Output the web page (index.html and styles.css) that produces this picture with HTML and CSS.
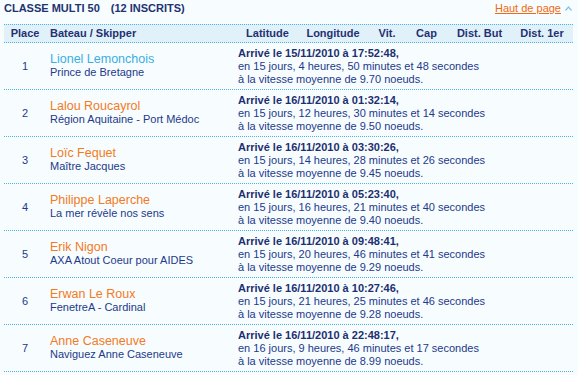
FILE: index.html
```html
<!DOCTYPE html>
<html lang="fr">
<head>
<meta charset="utf-8">
<title>Classe Multi 50</title>
<link rel="stylesheet" href="styles.css">
</head>
<body>
<div class="page">
  <div class="titlebar">
    <h1 class="title">CLASSE MULTI 50<span class="count">(12 INSCRITS)</span></h1>
    <a class="top" href="#">Haut de page</a>
    <svg class="caret" width="7" height="5" viewBox="0 0 7 5"><polyline points="0.5,4.5 3.5,1 6.5,4.5" fill="none" stroke="#7cc4e8" stroke-width="1.2"/></svg>
  </div>
  <div class="row head">
    <div class="c center">Place</div>
    <div class="c">Bateau / Skipper</div>
    <div class="c center">Latitude</div>
    <div class="c center">Longitude</div>
    <div class="c center">Vit.</div>
    <div class="c center">Cap</div>
    <div class="c center">Dist. But</div>
    <div class="c center">Dist. 1er</div>
  </div>

  <div class="row">
    <div class="place">1</div>
    <div class="boat"><div class="name blue">Lionel Lemonchois</div><div class="skip">Prince de Bretagne</div></div>
    <div class="data"><div class="b">Arrivé le 15/11/2010 à 17:52:48,</div><div>en 15 jours, 4 heures, 50 minutes et 48 secondes</div><div>à la vitesse moyenne de 9.70 noeuds.</div></div>
  </div>
  <div class="row">
    <div class="place">2</div>
    <div class="boat"><div class="name">Lalou Roucayrol</div><div class="skip">Région Aquitaine - Port Médoc</div></div>
    <div class="data"><div class="b">Arrivé le 16/11/2010 à 01:32:14,</div><div>en 15 jours, 12 heures, 30 minutes et 14 secondes</div><div>à la vitesse moyenne de 9.50 noeuds.</div></div>
  </div>
  <div class="row">
    <div class="place">3</div>
    <div class="boat"><div class="name">Loïc Fequet</div><div class="skip">Maître Jacques</div></div>
    <div class="data"><div class="b">Arrivé le 16/11/2010 à 03:30:26,</div><div>en 15 jours, 14 heures, 28 minutes et 26 secondes</div><div>à la vitesse moyenne de 9.45 noeuds.</div></div>
  </div>
  <div class="row">
    <div class="place">4</div>
    <div class="boat"><div class="name">Philippe Laperche</div><div class="skip">La mer révèle nos sens</div></div>
    <div class="data"><div class="b">Arrivé le 16/11/2010 à 05:23:40,</div><div>en 15 jours, 16 heures, 21 minutes et 40 secondes</div><div>à la vitesse moyenne de 9.40 noeuds.</div></div>
  </div>
  <div class="row">
    <div class="place">5</div>
    <div class="boat"><div class="name">Erik Nigon</div><div class="skip">AXA Atout Coeur pour AIDES</div></div>
    <div class="data"><div class="b">Arrivé le 16/11/2010 à 09:48:41,</div><div>en 15 jours, 20 heures, 46 minutes et 41 secondes</div><div>à la vitesse moyenne de 9.29 noeuds.</div></div>
  </div>
  <div class="row">
    <div class="place">6</div>
    <div class="boat"><div class="name">Erwan Le Roux</div><div class="skip">FenetreA - Cardinal</div></div>
    <div class="data"><div class="b">Arrivé le 16/11/2010 à 10:27:46,</div><div>en 15 jours, 21 heures, 25 minutes et 46 secondes</div><div>à la vitesse moyenne de 9.28 noeuds.</div></div>
  </div>
  <div class="row">
    <div class="place">7</div>
    <div class="boat"><div class="name">Anne Caseneuve</div><div class="skip">Naviguez Anne Caseneuve</div></div>
    <div class="data"><div class="b">Arrivé le 16/11/2010 à 22:48:17,</div><div>en 16 jours, 9 heures, 46 minutes et 17 secondes</div><div>à la vitesse moyenne de 8.99 noeuds.</div></div>
  </div>
</div>
</body>
</html>
```

FILE: styles.css
```css
html, body {
  margin: 0;
  padding: 0;
  background: #f7fdff;
}
body {
  font-family: "Liberation Sans", Arial, sans-serif;
  font-size: 11px;
  color: #23398a;
}
.page {
  padding: 0 5px 0 4px;
}
.titlebar {
  display: flex;
  align-items: baseline;
  height: 24px;
  box-sizing: border-box;
  padding-top: 2px;
  line-height: 13px;
}
.title {
  margin: 0;
  font-size: 11px;
  font-weight: bold;
  color: #22326f;
  flex: 1;
}
.count {
  margin-left: 11px;
}
.top {
  color: #f06a12;
  text-decoration: underline;
  margin-right: 4px;
}
.caret {
  margin-right: 1px;
  align-self: flex-start;
  margin-top: 4px;
}
.row {
  display: grid;
  grid-template-columns: 42px 192px 59px 72px 36px 43px 63px 62px;
  align-items: center;
  height: 46px;
  border-bottom: 1px dotted #4fb2e2;
}
.row.head {
  height: 16px;
  padding-bottom: 1px;
  background: #e1f1f9;
  border-top: 1px dotted #4fb2e2;
  font-weight: bold;
  color: #1f3173;
  line-height: 16px;
}
.c {
  white-space: nowrap;
}
.head .c:nth-child(2) {
  padding-left: 4px;
}
.center {
  text-align: center;
}
.place {
  text-align: center;
  color: #23398a;
}
.boat {
  padding-left: 4px;
}
.name {
  font-size: 12.5px;
  line-height: 13px;
  color: #f47a1e;
}
.name.blue {
  color: #3aaee2;
}
.skip {
  line-height: 13px;
  color: #23398a;
}
.data {
  grid-column: 3 / -1;
  line-height: 13px;
  white-space: nowrap;
  color: #23398a;
  padding-top: 1px;
}
.data .b {
  font-weight: bold;
  color: #1d2f6f;
}
```
